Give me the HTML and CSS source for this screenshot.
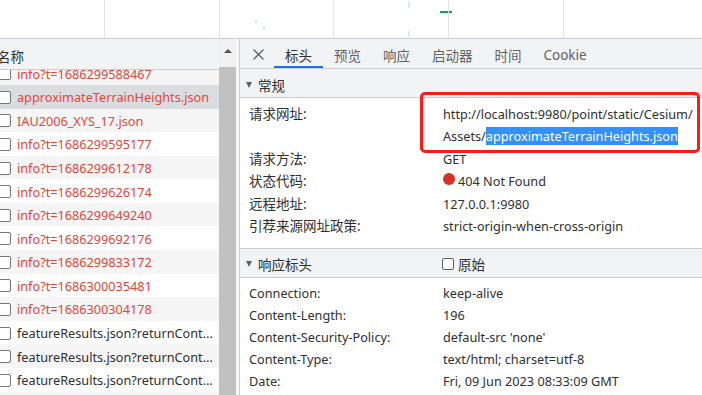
FILE: index.html
```html
<!DOCTYPE html>
<html lang="zh-CN">
<head>
<meta charset="utf-8">
<title>Network</title>
<link rel="stylesheet" href="styles.css">
</head>
<body>
<div class="overview">
  <div class="ov-col first"></div>
  <div class="ov-col"></div>
  <div class="ov-col"><span class="tick t1"></span><span class="tick t2"></span></div>
  <div class="ov-col"><span class="tick t3"></span><span class="tick t4"></span><span class="bar-green"></span></div>
  <div class="ov-col"></div>
  <div class="ov-col last"></div>
</div>
<div class="main">
  <div class="left">
    <div class="list">
      <div class="list-head"><span class="head-name">名称</span></div>
      <div class="rows">
        <div class="rows-inner">
          <div class="row alt err"><span class="cb"></span><span class="name">info?t=1686299588467</span></div>
          <div class="row sel err"><span class="cb"></span><span class="name">approximateTerrainHeights.json</span></div>
          <div class="row alt err"><span class="cb"></span><span class="name">IAU2006_XYS_17.json</span></div>
          <div class="row err"><span class="cb"></span><span class="name">info?t=1686299595177</span></div>
          <div class="row alt err"><span class="cb"></span><span class="name">info?t=1686299612178</span></div>
          <div class="row err"><span class="cb"></span><span class="name">info?t=1686299626174</span></div>
          <div class="row alt err"><span class="cb"></span><span class="name">info?t=1686299649240</span></div>
          <div class="row err"><span class="cb"></span><span class="name">info?t=1686299692176</span></div>
          <div class="row alt err"><span class="cb"></span><span class="name">info?t=1686299833172</span></div>
          <div class="row err"><span class="cb"></span><span class="name">info?t=1686300035481</span></div>
          <div class="row alt err"><span class="cb"></span><span class="name">info?t=1686300304178</span></div>
          <div class="row"><span class="cb"></span><span class="name">featureResults.json?returnContent=true</span></div>
          <div class="row alt"><span class="cb"></span><span class="name">featureResults.json?returnContent=true</span></div>
          <div class="row"><span class="cb"></span><span class="name">featureResults.json?returnContent=true</span></div>
          <div class="row alt"><span class="cb"></span><span class="name">featureResults.json?returnContent=true</span></div>
        </div>
      </div>
    </div>
    <div class="scrollbar">
      <div class="sb-track"><span class="sb-arrow"></span></div>
      <div class="sb-thumb"></div>
    </div>
    <div class="gap"></div>
  </div>
  <div class="right">
    <div class="tabs">
      <div class="close">
        <svg width="13" height="13" viewBox="0 0 13 13"><path d="M1.5 1.5 L11.5 11.5 M11.5 1.5 L1.5 11.5" stroke="#5f6368" stroke-width="1.3" fill="none"/></svg>
      </div>
      <div class="tab active">标头</div>
      <div class="tab">预览</div>
      <div class="tab">响应</div>
      <div class="tab">启动器</div>
      <div class="tab">时间</div>
      <div class="tab">Cookie</div>
    </div>
    <div class="sec-head"><span class="tri"></span><span class="cjk">常规</span></div>
    <div class="sec-body general">
      <div class="kv">
        <div class="k cjk">请求网址:</div>
        <div class="v">http://localhost:9980/point/static/Cesium/<br>Assets/<span class="hl">approximateTerrainHeights.json</span></div>
        <div class="k cjk">请求方法:</div>
        <div class="v">GET</div>
        <div class="k cjk">状态代码:</div>
        <div class="v"><span class="dot"></span>404 Not Found</div>
        <div class="k cjk">远程地址:</div>
        <div class="v">127.0.0.1:9980</div>
        <div class="k cjk">引荐来源网址政策:</div>
        <div class="v">strict-origin-when-cross-origin</div>
      </div>
    </div>
    <div class="sec-head second">
      <span class="tri"></span><span class="sec-title cjk">响应标头</span>
      <label class="raw cjk"><span class="cb2"></span>原始</label>
    </div>
    <div class="sec-body resp">
      <div class="kv tight">
        <div class="k">Connection:</div>
        <div class="v">keep-alive</div>
        <div class="k">Content-Length:</div>
        <div class="v">196</div>
        <div class="k">Content-Security-Policy:</div>
        <div class="v">default-src 'none'</div>
        <div class="k">Content-Type:</div>
        <div class="v">text/html; charset=utf-8</div>
        <div class="k">Date:</div>
        <div class="v">Fri, 09 Jun 2023 08:33:09 GMT</div>
      </div>
    </div>
  </div>
</div>
<div class="annot"></div>
</body>
</html>
```
FILE: styles.css
```css
* { box-sizing: border-box; }
html, body { margin: 0; padding: 0; }
body {
  width: 702px;
  height: 395px;
  overflow: hidden;
  position: relative;
  background: #fff;
  font-family: "Noto Sans", "Noto Sans CJK SC", sans-serif;
  font-size: 12.7px;
  color: #303030;
}
.cjk { font-size: 13.5px; }

.overview {
  display: flex;
  height: 39px;
  border-bottom: 1px solid #cacdd1;
  background: #fff;
}
.ov-col {
  position: relative;
  width: 114.7px;
  border-left: 1px solid #e3e3e3;
  flex: none;
}
.ov-col.first { width: 104px; border-left: none; }
.ov-col.last { flex: 1; }
.tick {
  position: absolute;
  width: 2px;
  height: 3px;
  background: #d7e8f7;
}
.t1 { left: 35px; top: 20px; }
.t2 { left: 43px; top: 27px; }
.t3 { left: 74px; top: 2px; height: 6px; }
.t4 { left: 74px; top: 31px; height: 6px; }
.bar-green {
  position: absolute;
  left: 106px;
  top: 11px;
  width: 12px;
  height: 2px;
  background: #0ca54a;
}

.main {
  display: flex;
  height: 356px;
}

.left {
  display: flex;
  width: 239px;
  flex: none;
}
.list {
  width: 219px;
  display: flex;
  flex-direction: column;
  overflow: hidden;
}
.list-head {
  height: 31px;
  background: #f1f3f4;
  border-bottom: 1px solid #cacdd1;
  display: flex;
  align-items: center;
  padding-top: 4px;
  flex: none;
}
.head-name { margin-left: -3px; color: #303030; font-size: 13.5px; }
.rows { flex: 1; overflow: hidden; }
.rows-inner { margin-top: -8.6px; }
.row {
  height: 23.58px;
  display: flex;
  align-items: center;
  padding-top: 1px;
  background: #fff;
  color: #303030;
  white-space: nowrap;
}
.row.alt { background: #f5f5f5; }
.row.sel { background: #dadce0; }
.row.err { color: #e8453c; }
.cb {
  flex: none;
  width: 13px;
  height: 13px;
  margin-left: -2px;
  margin-right: 6px;
  border: 1px solid #767676;
  border-radius: 2px;
  background: #fff;
}
.name {
  overflow: hidden;
  text-overflow: ellipsis;
  width: 200px;
}

.scrollbar {
  width: 17px;
  display: flex;
  flex-direction: column;
  flex: none;
}
.sb-track {
  height: 28px;
  background: #f1f1f1;
  display: flex;
  justify-content: center;
  padding-top: 10px;
}
.sb-arrow {
  width: 0;
  height: 0;
  border-left: 4px solid transparent;
  border-right: 4px solid transparent;
  border-bottom: 4px solid #505050;
}
.sb-thumb { flex: 1; background: #c1c1c1; }
.gap { width: 3px; background: #f7f7f7; }

.right {
  flex: 1;
  border-left: 1px solid #cacdd1;
  display: flex;
  flex-direction: column;
}
.tabs {
  height: 30px;
  background: #f1f3f4;
  border-bottom: 1px solid #cacdd1;
  display: flex;
  align-items: stretch;
  flex: none;
  font-size: 13.5px;
}
.close {
  width: 34px;
  display: flex;
  align-items: center;
  padding-left: 12px;
  padding-top: 1px;
}
.tab {
  padding: 4px 11px 0;
  display: flex;
  align-items: center;
  color: #5f6368;
  border-bottom: 2px solid transparent;
}
.tab.active { color: #303030; border-bottom-color: #1a73e8; }

.sec-head {
  height: 29px;
  background: #f1f3f4;
  border-bottom: 1px solid #cacdd1;
  display: flex;
  align-items: center;
  padding-left: 6px;
  padding-top: 3px;
  color: #303030;
  flex: none;
}
.sec-head.second { border-top: 1px solid #cacdd1; height: 30px; }
.tri {
  width: 0;
  height: 0;
  border-left: 3.5px solid transparent;
  border-right: 3.5px solid transparent;
  border-top: 6px solid #606060;
  margin-right: 6px;
}
.sec-title { width: 190px; }
.raw { display: flex; align-items: center; margin-left: -6px; }
.cb2 {
  width: 12px;
  height: 12px;
  border: 1px solid #5f6368;
  border-radius: 2px;
  margin-right: 4px;
  background: #fff;
}

.sec-body { padding-left: 9px; }
.general { padding-top: 4.75px; padding-bottom: 10px; }
.resp { padding-top: 4px; }
.kv {
  display: grid;
  grid-template-columns: 194px 1fr;
  line-height: 22.5px;
}
.kv.tight { line-height: 22px; }
.k, .v { white-space: nowrap; }
.hl { background: #3390ff; color: #fff; }
.dot {
  display: inline-block;
  width: 12px;
  height: 12px;
  border-radius: 50%;
  background: #d93025;
  margin-right: 3px;
  vertical-align: 1px;
}

.annot {
  position: absolute;
  left: 420px;
  top: 92px;
  width: 280px;
  height: 61px;
  border: 3px solid #ff1a1a;
  border-radius: 5px;
}
```
